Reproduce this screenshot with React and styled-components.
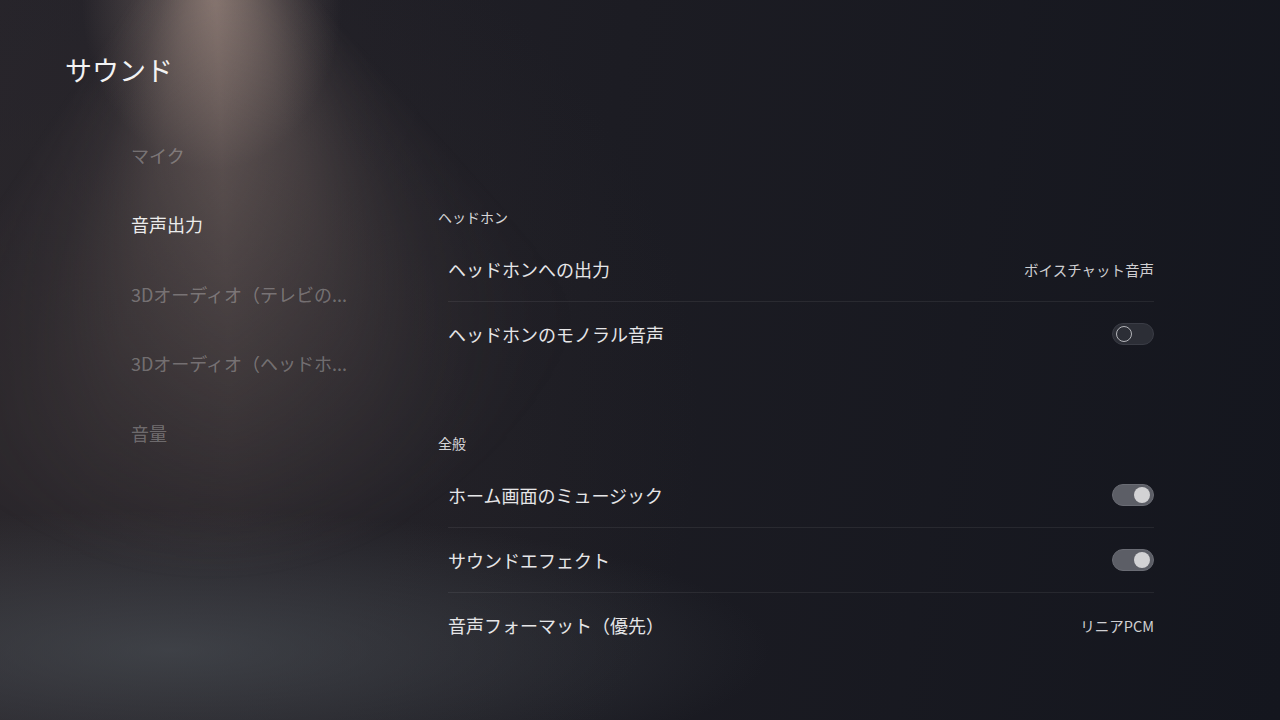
import React from 'react'
import styled, { createGlobalStyle } from 'styled-components'

const GlobalStyle = createGlobalStyle`
  html, body {
    margin: 0;
    padding: 0;
    background: #15161d;
  }
  * {
    box-sizing: border-box;
  }
`

// spotlight cone from the top-left, faded out with a mask
const Screen = styled.div`
  position: relative;
  width: 1280px;
  height: 720px;
  overflow: hidden;
  display: grid;
  grid-template-columns: 438px 716px;
  font-family: 'Noto Sans CJK JP', 'Noto Sans', sans-serif;
  color: #e4e4e6;
  background:
    radial-gradient(ellipse 130px 170px at 212px 0px, rgba(160, 140, 132, 0.55), rgba(160, 140, 132, 0) 100%),
    radial-gradient(ellipse 600px 140px at 170px 650px, rgba(78, 84, 90, 0.6), rgba(78, 84, 90, 0) 100%),
    radial-gradient(ellipse 700px 600px at 0px 420px, rgba(44, 40, 44, 0.9), rgba(44, 40, 44, 0) 100%),
    linear-gradient(100deg, #25232a 0%, #1c1c23 45%, #14161e 100%);

  &::before {
    content: '';
    position: absolute;
    inset: 0;
    background: conic-gradient(
      at 212px -120px,
      rgba(140, 122, 115, 0) 0deg,
      rgba(140, 122, 115, 0) 138deg,
      rgba(140, 122, 115, 0.2) 150deg,
      rgba(140, 122, 115, 0.5) 163deg,
      rgba(150, 130, 122, 0.68) 178deg,
      rgba(140, 122, 115, 0.5) 191deg,
      rgba(140, 122, 115, 0.18) 202deg,
      rgba(140, 122, 115, 0) 214deg,
      rgba(140, 122, 115, 0) 360deg
    );
    -webkit-mask-image: radial-gradient(ellipse 470px 620px at 212px -40px, #000 0%, rgba(0, 0, 0, 0.6) 40%, transparent 100%);
    mask-image: radial-gradient(ellipse 470px 620px at 212px -40px, #000 0%, rgba(0, 0, 0, 0.6) 40%, transparent 100%);
  }
`

const Sidebar = styled.aside`
  position: relative;
  padding-left: 65px;
  display: flex;
  flex-direction: column;
`

const Title = styled.h1`
  margin: 52px 0 0;
  font-size: 27px;
  line-height: 36px;
  font-weight: 400;
  color: #f2f2f2;
`

const Nav = styled.nav`
  margin-top: 32px;
  padding-left: 66px;
  display: flex;
  flex-direction: column;
`

const NavItem = styled.div`
  height: 69.5px;
  display: flex;
  align-items: center;
  font-size: 18px;
  white-space: nowrap;
  color: ${p => (p.$active ? '#ececec' : 'rgba(255, 255, 255, 0.3)')};
`

const Content = styled.main`
  position: relative;
  padding-top: 207px;
  display: flex;
  flex-direction: column;
`

const Section = styled.section`
  display: flex;
  flex-direction: column;
  & + & {
    margin-top: 66px;
  }
`

const SectionTitle = styled.h2`
  margin: 0 0 10px;
  font-size: 14px;
  line-height: 20px;
  font-weight: 400;
  color: #d6d6d8;
`

const Row = styled.div`
  margin-left: 10px;
  height: 65px;
  display: flex;
  align-items: center;
  justify-content: space-between;
  border-bottom: 1px solid ${p => (p.$last ? 'transparent' : 'rgba(255, 255, 255, 0.07)')};
`

const Label = styled.span`
  font-size: 18px;
  color: #e6e6e8;
`

const Value = styled.span`
  font-size: 14.5px;
  color: #cfcfd2;
`

const Track = styled.div`
  width: 42px;
  height: 22px;
  border-radius: 11px;
  display: flex;
  align-items: center;
  justify-content: ${p => (p.$on ? 'flex-end' : 'flex-start')};
  padding: 0 3px;
  background: ${p => (p.$on ? '#5c5e66' : '#2c2e36')};
  border: 1px solid ${p => (p.$on ? '#6a6c74' : '#3a3c45')};
`

const Knob = styled.div`
  width: 16px;
  height: 16px;
  border-radius: 50%;
  background: ${p => (p.$on ? '#d2d2d4' : 'transparent')};
  border: ${p => (p.$on ? 'none' : '1.5px solid #b4b5ba')};
`

const Toggle = ({ on }) => (
  <Track $on={on}>
    <Knob $on={on} />
  </Track>
)

const navItems = [
  { label: 'マイク' },
  { label: '音声出力', active: true },
  { label: '3Dオーディオ（テレビの...' },
  { label: '3Dオーディオ（ヘッドホ...' },
  { label: '音量' },
]

const sections = [
  {
    title: 'ヘッドホン',
    rows: [
      { label: 'ヘッドホンへの出力', value: 'ボイスチャット音声' },
      { label: 'ヘッドホンのモノラル音声', toggle: false },
    ],
  },
  {
    title: '全般',
    rows: [
      { label: 'ホーム画面のミュージック', toggle: true },
      { label: 'サウンドエフェクト', toggle: true },
      { label: '音声フォーマット（優先）', value: 'リニアPCM' },
    ],
  },
]

export default function App() {
  return (
    <>
      <GlobalStyle />
      <Screen>
        <Sidebar>
          <Title>サウンド</Title>
          <Nav>
            {navItems.map(item => (
              <NavItem key={item.label} $active={item.active}>
                {item.label}
              </NavItem>
            ))}
          </Nav>
        </Sidebar>
        <Content>
          {sections.map(section => (
            <Section key={section.title}>
              <SectionTitle>{section.title}</SectionTitle>
              {section.rows.map((row, i) => (
                <Row key={row.label} $last={i === section.rows.length - 1}>
                  <Label>{row.label}</Label>
                  {row.value ? <Value>{row.value}</Value> : <Toggle on={row.toggle} />}
                </Row>
              ))}
            </Section>
          ))}
        </Content>
      </Screen>
    </>
  )
}
